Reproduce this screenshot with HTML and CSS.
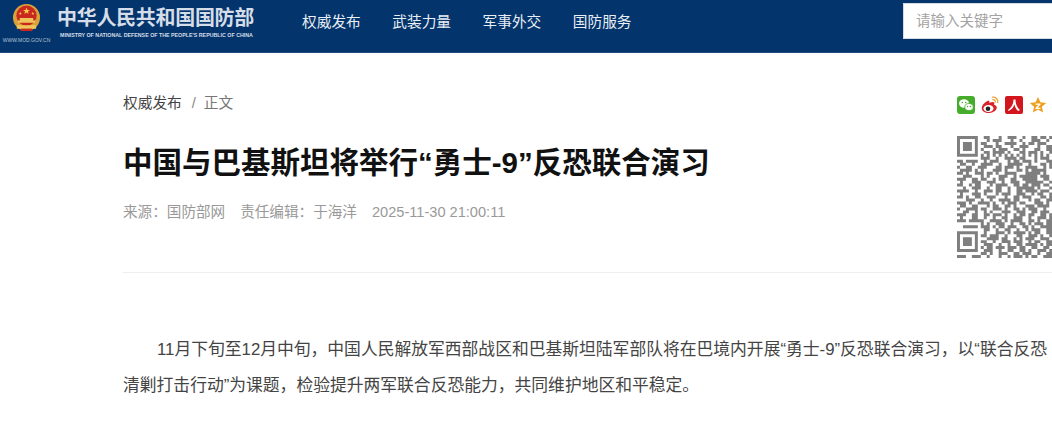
FILE: index.html
```html
<!DOCTYPE html>
<html lang="zh-CN">
<head>
    <meta charset="UTF-8">
    <title>中国与巴基斯坦将举行“勇士-9”反恐联合演习</title>
    <link rel="stylesheet" href="styles.css">
</head>
<body>
    <header class="topbar">
        <a class="logo" href="#">
            <div class="emblem-wrap">
                <svg class="emblem" viewBox="0 0 30 30" width="29" height="29">
                    <circle cx="15" cy="14" r="14" fill="#d9a13a"/>
                    <circle cx="15" cy="12" r="10.5" fill="#c9281f"/>
                    <path d="M15 3.5l1 2.6h2.6l-2.1 1.6.8 2.6-2.3-1.6-2.3 1.6.8-2.6-2.1-1.6H14zM8.5 8l.5 1.2h1.2l-1 .8.4 1.2-1.1-.7-1 .7.4-1.2-1-.8H8zM21.5 8l.5 1.2h1.2l-1 .8.4 1.2-1.1-.7-1 .7.4-1.2-1-.8H21z" fill="#f3c84b"/>
                    <path d="M6 17h18v2.5H6zM8 14.5h14V17H8zM5 22h20v3.5H5z" fill="#f0c65a"/>
                    <path d="M9 25.500h12v2.500H9z" fill="#c9281f"/>
                </svg>
                <span class="site-url">WWW.MOD.GOV.CN</span>
            </div>
            <div class="logo-text">
                <span class="logo-cn">中华人民共和国国防部</span>
                <span class="logo-en">MINISTRY OF NATIONAL DEFENSE OF THE PEOPLE'S REPUBLIC OF CHINA</span>
            </div>
        </a>
        <nav class="nav">
            <a href="#">权威发布</a>
            <a href="#">武装力量</a>
            <a href="#">军事外交</a>
            <a href="#">国防服务</a>
        </nav>
        <div class="search">请输入关键字</div>
    </header>

    <main class="page">
        <div class="head">
            <div class="head-left">
                <div class="crumbs"><a href="#">权威发布</a><span class="sep">/</span><span>正文</span></div>
                <h1>中国与巴基斯坦将举行“勇士-9”反恐联合演习</h1>
                <div class="meta">
                    <span>来源：国防部网</span>
                    <span>责任编辑：于海洋</span>
                    <span>2025-11-30 21:00:11</span>
                </div>
            </div>
            <div class="head-right">
                <div class="share">
                    <svg class="share-icon" viewBox="0 0 18 18" width="18" height="18">
                        <rect width="18" height="18" rx="3" fill="#46ad2c"/>
                        <ellipse cx="7" cy="7.500" rx="5" ry="4.200" fill="#fff"/>
                        <ellipse cx="12" cy="11" rx="4.200" ry="3.500" fill="#fff" stroke="#46ad2c" stroke-width=".8"/>
                        <circle cx="5.300" cy="6.500" r=".8" fill="#46ad2c"/>
                        <circle cx="8.700" cy="6.500" r=".8" fill="#46ad2c"/>
                        <circle cx="10.600" cy="10.500" r=".7" fill="#46ad2c"/>
                        <circle cx="13.400" cy="10.500" r=".7" fill="#46ad2c"/>
                    </svg>
                    <svg class="share-icon" viewBox="0 0 18 18" width="18" height="18">
                        <path d="M7.500 4.500C3.500 6 .5 9.500.8 12.500c.3 3 3.800 4.800 7.500 4.500 4-.3 7.500-2.700 7.500-5.500 0-2-2.300-2.500-2.700-2.700.5-1.500.2-2.700-1.500-2.800-1 0-2.200.4-3.200.9.300-1.500-.2-2.900-1.400-2.400z" fill="#d8232c"/>
                        <ellipse cx="7.500" cy="12.500" rx="5" ry="3.500" fill="#fff"/>
                        <circle cx="7" cy="12.700" r="2.300" fill="#222"/>
                        <path d="M11.500 1.200c3-.5 5.800 2 5.300 5.300M11.800 3.700c1.500-.2 2.700 1 2.500 2.500" fill="none" stroke="#e9a23b" stroke-width="1.300" stroke-linecap="round"/>
                    </svg>
                    <svg class="share-icon" viewBox="0 0 18 18" width="18" height="18">
                        <rect width="18" height="18" rx="2" fill="#d2161c"/>
                        <path d="M8.500 3.500h2c0 4 1.500 8 4.500 10.500l-2 1c-2-2-3.200-4.300-3.700-6.800C9 11 6.500 13.500 3.500 15L3 14c3.500-2.500 5.500-6 5.500-10.500z" fill="#fff"/>
                    </svg>
                    <svg class="share-icon" viewBox="0 0 18 18" width="18" height="18">
                        <path d="M9 1l2.400 5.300 5.800.6-4.300 3.900 1.200 5.700L9 13.600l-5.100 2.900 1.200-5.700L.8 6.900l5.800-.6z" fill="#ef9f1c"/>
                        <path d="M6.500 7.500h5v1.300l-3 3h3v1.200h-5v-1.300l3-3h-3z" fill="#fff"/>
                    </svg>
                </div>
                <svg class="qr" viewBox="0 0 41 41" width="122" height="122">
                    <path d="M0 .5h7m2 0h2m3 0h1m2 0h3m2 0h1m2 0h2m1 0h2m1 0h1m1 0h4m2 0h6
                             M0 1.500h1m5 0h1m3 0h1m1 0h3m3 0h1m2 0h1m3 0h3m2 0h1m1 0h1m2 0h1m1 0h3m2 0h1
                             M0 2.500h1m1 0h3m1 0h1m1 0h2m3 0h1m2 0h4m2 0h1m1 0h2m1 0h3m2 0h2m1 0h2m2 0h2
                             M0 3.500h1m1 0h3m1 0h1m2 0h3m1 0h2m3 0h1m2 0h3m3 0h1m2 0h3m1 0h1m1 0h1m1 0h2
                             M0 4.500h1m1 0h3m1 0h1m1 0h1m3 0h1m1 0h3m2 0h2m1 0h1m3 0h2m2 0h4m1 0h2m3 0h1
                             M0 5.500h1m5 0h1m2 0h2m1 0h4m1 0h1m3 0h2m1 0h3m1 0h1m2 0h1m1 0h1m2 0h2m1 0h1
                             M0 6.500h7m1 0h1m1 0h1m1 0h1m1 0h1m1 0h1m1 0h1m1 0h1m1 0h1m1 0h1m1 0h1m1 0h1m1 0h1m1 0h1m1 0h1
                             M8 7.500h3m2 0h1m2 0h4m1 0h2m3 0h1m1 0h3m2 0h2m2 0h2
                             M0 8.500h2m1 0h4m2 0h1m1 0h3m3 0h1m1 0h2m1 0h3m1 0h1m3 0h3m1 0h2m1 0h1
                             M1 9.500h2m2 0h1m2 0h4m2 0h1m2 0h5m2 0h1m3 0h2m1 0h3m3 0h2
                             M0 10.500h1m2 0h2m2 0h3m3 0h2m1 0h3m1 0h1m2 0h4m2 0h1m1 0h2m1 0h3m1 0h1
                             M1 11.500h4m1 0h1m1 0h1m3 0h3m1 0h1m3 0h2m1 0h1m1 0h5m2 0h1m2 0h2
                             M0 12.500h2m1 0h1m2 0h3m1 0h2m1 0h1m2 0h4m3 0h5m1 0h1m3 0h1m1 0h2
                             M2 13.500h3m3 0h1m1 0h1m3 0h3m2 0h1m1 0h6m1 0h3m1 0h1m2 0h2
                             M0 14.500h3m2 0h2m1 0h2m2 0h1m1 0h2m2 0h2m2 0h5m2 0h2m1 0h3m1 0h1
                             M1 15.500h1m3 0h3m2 0h3m2 0h1m2 0h3m2 0h6m2 0h1m2 0h2m1 0h1
                             M0 16.500h2m2 0h1m1 0h2m3 0h1m1 0h4m2 0h2m1 0h2m1 0h3m1 0h2m2 0h3
                             M2 17.500h1m2 0h3m2 0h1m2 0h2m2 0h1m2 0h6m1 0h1m3 0h1m1 0h2m2 0h1
                             M0 18.500h4m2 0h1m2 0h3m1 0h2m2 0h1m2 0h2m1 0h4m1 0h3m1 0h2m2 0h1
                             M1 19.500h1m3 0h3m1 0h1m3 0h1m1 0h3m2 0h3m2 0h1m1 0h2m2 0h3m1 0h1
                             M0 20.500h2m1 0h1m2 0h2m2 0h3m3 0h1m2 0h2m1 0h3m3 0h2m1 0h1m1 0h2
                             M3 21.500h3m2 0h1m2 0h1m2 0h4m1 0h2m3 0h1m1 0h2m2 0h2m1 0h3
                             M0 22.500h3m1 0h1m2 0h4m1 0h1m2 0h1m1 0h3m1 0h2m3 0h3m1 0h1m1 0h2m1 0h1
                             M1 23.500h2m2 0h2m3 0h1m1 0h2m2 0h2m1 0h1m3 0h3m1 0h4m2 0h1m1 0h1
                             M0 24.500h1m2 0h4m1 0h2m2 0h3m1 0h1m2 0h2m1 0h1m1 0h3m2 0h1m3 0h3
                             M2 25.500h2m2 0h1m2 0h1m1 0h1m3 0h3m2 0h3m2 0h2m1 0h3m1 0h2m2 0h1
                             M0 26.500h3m2 0h2m2 0h2m1 0h3m1 0h1m2 0h1m1 0h2m1 0h2m2 0h2m1 0h1m1 0h3
                             M1 27.500h1m3 0h2m2 0h1m2 0h1m2 0h2m2 0h3m2 0h1m2 0h3m1 0h2m1 0h2
                             M0 28.500h3m1 0h5m2 0h4m1 0h1m1 0h4m2 0h2m1 0h1m2 0h2m1 0h1
                             M8 29.500h1m1 0h1m2 0h3m2 0h1m2 0h2m1 0h1m1 0h3m1 0h2m2 0h1m1 0h1
                             M2 30.500h5m1 0h3m1 0h1m1 0h2m1 0h3m2 0h2m1 0h1m2 0h4m1 0h2
                             M9 31.500h2m2 0h1m2 0h2m2 0h1m2 0h1m1 0h3m2 0h2m2 0h1m1 0h2
                             M0 32.500h7m2 0h1m3 0h3m1 0h1m1 0h4m1 0h1m1 0h2m2 0h2m1 0h3
                             M0 33.500h1m5 0h1m1 0h2m1 0h3m2 0h1m3 0h2m2 0h3m1 0h1m2 0h1m2 0h2
                             M0 34.500h1m1 0h3m1 0h1m3 0h4m1 0h2m2 0h1m1 0h1m1 0h3m2 0h3m1 0h1
                             M0 35.500h1m1 0h3m1 0h1m1 0h2m2 0h1m2 0h3m1 0h3m2 0h1m1 0h2m2 0h2m1 0h2
                             M0 36.500h1m1 0h3m1 0h1m2 0h3m2 0h1m2 0h1m2 0h2m1 0h4m1 0h1m1 0h3
                             M0 37.500h1m5 0h1m1 0h1m1 0h2m1 0h3m1 0h3m1 0h2m2 0h2m2 0h2m2 0h1
                             M0 38.500h7m2 0h3m2 0h1m2 0h2m2 0h2m1 0h1m2 0h3m1 0h3
                             M8 39.500h2m1 0h1m2 0h3m2 0h2m1 0h3m2 0h1m2 0h2m2 0h1
                             M0 40.500h3m2 0h3m2 0h1m3 0h1m2 0h1m1 0h3m1 0h1m1 0h2m2 0h3" fill="none" stroke="#7f7f7f" stroke-width="1"/>
                </svg>
            </div>
        </div>
        <div class="body-text">
            <p>11月下旬至12月中旬，中国人民解放军西部战区和巴基斯坦陆军部队将在巴境内开展“勇士-9”反恐联合演习，以“联合反恐清剿打击行动”为课题，检验提升两军联合反恐能力，共同维护地区和平稳定。</p>
        </div>
    </main>
</body>
</html>
```
FILE: styles.css
```css
* { box-sizing: border-box; }
html, body { margin: 0; padding: 0; }
body {
    width: 1052px;
    height: 437px;
    overflow: hidden;
    background: #fff;
    font-family: "Liberation Sans", "Noto Sans CJK SC", sans-serif;
    color: #333;
}
a { color: inherit; text-decoration: none; }

.topbar {
    display: flex;
    align-items: flex-start;
    width: 1300px;
    height: 53px;
    background: #03346c;
    border-bottom: 1px solid #1f4c80;
}
.logo { display: flex; width: 302px; padding-left: 4px; }
.emblem-wrap { display: flex; flex-direction: column; align-items: center; width: 45px; padding-top: 4px; }
.emblem { display: block; }
.site-url { font-size: 5px; line-height: 6px; color: #b7c4d4; margin-top: 4px; white-space: nowrap; }
.logo-text { display: flex; flex-direction: column; margin-left: 8px; padding-top: 6px; }
.logo-cn { font-size: 20px; line-height: 24px; font-weight: 700; color: #d5dee8; letter-spacing: -.3px; white-space: nowrap; }
.logo-en { font-size: 5.300px; line-height: 6px; font-weight: 700; color: #d5dee8; margin: 2px 0 0 3px; white-space: nowrap; }

.nav { display: flex; gap: 31.500px; padding-top: 12px; width: 601px; }
.nav a { font-size: 14.700px; line-height: 20px; color: #e9eef4; }
.search {
    width: 260px;
    height: 36px;
    margin-top: 3px;
    padding-left: 12px;
    background: #fff;
    border: 1px solid #d5dbe3;
    font-size: 14.500px;
    line-height: 34px;
    color: #a3a3a3;
}

.page { width: 1200px; padding: 41px 0 0 123px; }
.head { display: flex; justify-content: space-between; width: 1000px; height: 179px; border-bottom: 1px solid #eee; }
.crumbs { font-size: 14.700px; line-height: 18px; color: #777; }
.crumbs a { color: #444; }
.sep { margin: 0 8px 0 10px; color: #888; }
h1 { margin: 30px 0 0; font-size: 29.500px; line-height: 42px; font-weight: 700; color: #111; }
.meta { display: flex; gap: 15px; margin-top: 18px; font-size: 14.600px; line-height: 20px; color: #999; }

.head-right { width: 122px; margin-right: 44px; padding-top: 2px; flex: none; }
.share { display: flex; gap: 6px; }
.share-icon { display: block; flex: none; }
.qr { display: block; margin-top: 22px; }

.body-text { width: 935px; padding-top: 59px; }
.body-text p { margin: 0; font-size: 16.800px; line-height: 36px; text-indent: 34px; color: #444; }
```
